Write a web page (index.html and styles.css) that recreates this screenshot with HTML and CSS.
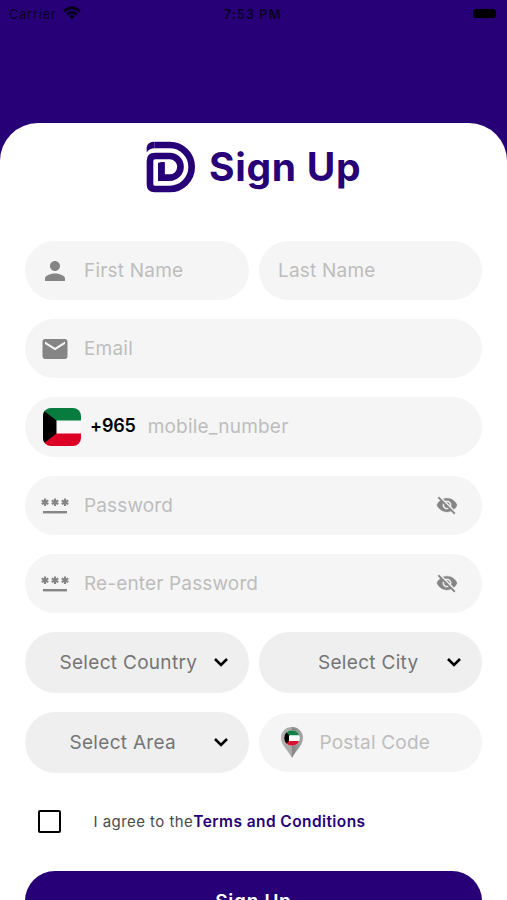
FILE: index.html
```html
<!DOCTYPE html>
<html lang="en">
<head>
<meta charset="utf-8">
<title>Sign Up</title>
<link rel="stylesheet" href="styles.css">
</head>
<body>
<header class="status">
  <div class="carrier"><span>Carrier</span>
    <svg width="18" height="14" viewBox="0 0 18 14"><g fill="none" stroke="#05001f" stroke-width="2.900"><path d="M1 5.200Q9-1.800 17 5.200"/><path d="M4 8.400Q9 4 14 8.400"/></g><path d="M6 10.200Q9 7.600 12 10.200L9 13.200Z" fill="#05001f"/></svg>
  </div>
  <span class="time">7:53 PM</span>
  <span class="battery"></span>
</header>
<main class="sheet">
  <div class="title">
    <svg class="logo" width="50" height="52" viewBox="34 32 150 156"><path d="M60 44H105A66 66 0 0 1 105 176H60Q46 176 46 162V92Q46 77 61 77H105A32.500 32.500 0 0 1 105 142H80V97" fill="none" stroke="#270078" stroke-width="20"/><path d="M36 66V51Q38 34 60 34V54Q45 54 36 66Z" fill="#270078"/><path d="M70 103Q72 95 82 95H90V136H70Z" fill="#270078"/></svg>
    <h1>Sign Up</h1>
  </div>
  <form class="form">
    <div class="row">
      <div class="field"><svg class="icon" width="30" height="30" viewBox="0 0 24 24"><path fill="#858585" d="M12 12c2.210 0 4-1.790 4-4s-1.790-4-4-4-4 1.790-4 4 1.790 4 4 4zm0 2c-2.670 0-8 1.340-8 4v2h16v-2c0-2.660-5.330-4-8-4z"/></svg><span class="hint">First Name</span></div>
      <div class="field plain"><span class="hint">Last Name</span></div>
    </div>
    <div class="field"><svg class="icon" width="30" height="30" viewBox="0 0 24 24"><path fill="#858585" d="M20 4H4c-1.100 0-2 .9-2 2v12c0 1.100.9 2 2 2h16c1.100 0 2-.9 2-2V6c0-1.100-.9-2-2-2zm0 4l-8 5-8-5V6l8 5 8-5v2z"/></svg><span class="hint">Email</span></div>
    <div class="field phone">
      <svg width="38" height="38" viewBox="0 0 38 38"><defs><clipPath id="flag"><rect width="38" height="38" rx="8"/></clipPath></defs><g clip-path="url(#flag)"><path fill="#f9f9f9" d="M0 0h38v38H0z"/><path fill="#087b3f" d="M0 0h38v12.500H0z"/><path fill="#dc0024" d="M0 25.500h38V38H0z"/><path d="M0 2l13.500 10.500v13L0 36z"/></g></svg>
      <b>+965</b><span class="hint">mobile_number</span>
    </div>
    <div class="field"><svg class="icon" width="30" height="30" viewBox="0 0 30 30"><g stroke="#858585" fill="none"><path stroke-width="2.400" d="M3 22.200h24"/><g stroke-width="2.100"><path id="star" d="M5 8.500v7.400M1.700 10.300l6.600 3.800M1.700 14.100l6.600-3.800"/><use href="#star" x="10"/><use href="#star" x="20"/></g></g></svg><span class="hint pass">Password</span><svg class="eye" width="22" height="22" viewBox="0 0 24 24"><path fill="#858585" stroke="#858585" stroke-width=".4" d="M12 7c2.760 0 5 2.240 5 5 0 .65-.13 1.260-.36 1.830l2.920 2.920c1.510-1.260 2.700-2.890 3.430-4.750-1.730-4.390-6-7.500-11-7.500-1.400 0-2.740.25-3.980.7l2.160 2.160C10.740 7.130 11.350 7 12 7zM2 4.270l2.280 2.280.46.46C3.080 8.300 1.780 10.020 1 12c1.730 4.390 6 7.500 11 7.500 1.550 0 3.030-.3 4.380-.84l.42.42L19.730 22 21 20.730 3.270 3 2 4.270zM7.530 9.800l1.550 1.550c-.05.21-.08.43-.08.65 0 1.660 1.340 3 3 3 .22 0 .44-.03.65-.08l1.550 1.550c-.67.33-1.410.53-2.200.53-2.760 0-5-2.240-5-5 0-.79.2-1.530.53-2.200zm4.310-.78l3.150 3.150.02-.16c0-1.660-1.340-3-3-3l-.17.01z"/></svg></div>
    <div class="field"><svg class="icon" width="30" height="30" viewBox="0 0 30 30"><g stroke="#858585" fill="none"><path stroke-width="2.400" d="M3 22.200h24"/><g stroke-width="2.100"><use href="#star"/><use href="#star" x="10"/><use href="#star" x="20"/></g></g></svg><span class="hint pass">Re-enter Password</span><svg class="eye" width="22" height="22" viewBox="0 0 24 24"><path fill="#858585" stroke="#858585" stroke-width=".4" d="M12 7c2.760 0 5 2.240 5 5 0 .65-.13 1.260-.36 1.830l2.920 2.920c1.510-1.260 2.700-2.890 3.430-4.750-1.730-4.390-6-7.500-11-7.500-1.400 0-2.740.25-3.980.7l2.160 2.160C10.740 7.130 11.350 7 12 7zM2 4.270l2.280 2.280.46.46C3.080 8.300 1.780 10.020 1 12c1.730 4.390 6 7.500 11 7.500 1.550 0 3.030-.3 4.380-.84l.42.42L19.730 22 21 20.730 3.270 3 2 4.270zM7.530 9.800l1.550 1.550c-.05.21-.08.43-.08.65 0 1.660 1.340 3 3 3 .22 0 .44-.03.65-.08l1.550 1.550c-.67.33-1.410.53-2.200.53-2.760 0-5-2.240-5-5 0-.79.2-1.530.53-2.200zm4.310-.78l3.150 3.150.02-.16c0-1.660-1.340-3-3-3l-.17.01z"/></svg></div>
    <div class="row">
      <div class="select"><span>Select Country</span><svg width="16" height="10" viewBox="0 0 16 10"><path d="M2 2l6 6 6-6"/></svg></div>
      <div class="select city"><span>Select City</span><svg width="16" height="10" viewBox="0 0 16 10"><path d="M2 2l6 6 6-6"/></svg></div>
    </div>
    <div class="row">
      <div class="select area"><span>Select Area</span><svg width="16" height="10" viewBox="0 0 16 10"><path d="M2 2l6 6 6-6"/></svg></div>
      <div class="field postal">
        <svg width="22" height="31" viewBox="0 0 22 31"><defs><linearGradient id="pin"><stop stop-color="#b2b2b2"/><stop offset=".5" stop-color="#a8a8a8"/><stop offset=".52" stop-color="#858585"/><stop offset="1" stop-color="#aaa"/></linearGradient><clipPath id="round"><circle cx="11" cy="11" r="7.800"/></clipPath></defs><path fill="url(#pin)" d="M11 0C4.700 0 0 4.800 0 10.800 0 18 6 22 11 31 16 22 22 18 22 10.800 22 4.800 17.300 0 11 0Z"/><g clip-path="url(#round)"><path fill="#fff" d="M0 0h22v22H0z"/><path fill="#168046" d="M0 0h22v8.300H0z"/><path fill="#d51431" d="M0 14h22v8H0z"/><path d="M2 2l6 6.300V14l-6 6z"/></g></svg>
        <span class="hint">Postal Code</span>
      </div>
    </div>
    <div class="terms"><span class="box"></span><span class="agree">I agree to the</span><b>Terms and Conditions</b></div>
    <div class="submit">Sign Up</div>
  </form>
</main>
</body>
</html>
```
FILE: styles.css
```css
* { box-sizing: border-box; }
body { margin: 0; height: 900px; overflow: hidden; background: #270078; font-family: Inter, sans-serif; }
svg { display: block; flex: none; }
span, b, h1 { white-space: nowrap; }
.status { height: 123px; padding: 0 11px 0 9px; display: grid; grid-template-columns: 1fr auto 1fr; align-items: start; color: #090026; font-size: 13px; line-height: 28px; }
.carrier { display: flex; gap: 6px; letter-spacing: .7px; }
.carrier svg { margin-top: 6px; }
.time { font-weight: 600; letter-spacing: .9px; }
.battery { justify-self: end; width: 23px; height: 9px; margin-top: 9px; border-radius: 3px; background: #000; }
.sheet { height: 777px; padding: 0 25px; background: #fff; border-radius: 38px 38px 0 0; overflow: hidden; }
.title { height: 118px; padding: 17px 0 0 121px; display: flex; align-items: flex-start; gap: 13px; }
.logo { margin-top: 1px; }
h1 { margin: 0; color: #270078; font-size: 39px; line-height: 53px; font-weight: 700; letter-spacing: .7px; }
.form { display: flex; flex-direction: column; gap: 19px; }
.row { display: grid; grid-template-columns: 1fr 1fr; gap: 10px; align-items: center; }
.field { height: 59.200px; border-radius: 30px; background: #f5f5f5; display: flex; align-items: center; padding-left: 15px; }
.icon { margin-right: 14px; }
.plain { padding-left: 19.500px; }
.hint { color: #bdbdbd; font-size: 19px; letter-spacing: .2px; }
.pass { letter-spacing: .15px; }
.phone { padding-left: 18px; }
.phone b { margin: -2px 12px 0 9px; font-size: 18px; font-weight: 600; letter-spacing: -.2px; }
.eye { margin: 0 24px 0 auto; }
.select { height: 61px; border-radius: 31px; background: #efefef; color: #757575; display: flex; align-items: center; padding: 0 20px 0 34.500px; font-size: 19px; letter-spacing: .3px; }
.select svg { margin-left: auto; fill: none; stroke: #000; stroke-width: 2.600; }
.city { padding-left: 59.500px; }
.area { padding-left: 44.500px; }
.postal { padding-left: 22px; }
.postal .hint { margin-left: 17px; }
.terms { height: 60px; display: flex; align-items: center; padding-left: 13px; font-size: 15px; letter-spacing: .45px; color: #4a4a4a; }
.box { width: 23px; height: 23px; border: 2.500px solid #000; border-radius: 2px; margin-right: 32.500px; }
.terms b { color: #270078; font-size: 15.500px; font-weight: 600; letter-spacing: .42px; }
.submit { height: 61px; border-radius: 30px; background: #270078; color: #fff; display: flex; align-items: center; justify-content: center; font-size: 19px; font-weight: 600; letter-spacing: .7px; }
```
